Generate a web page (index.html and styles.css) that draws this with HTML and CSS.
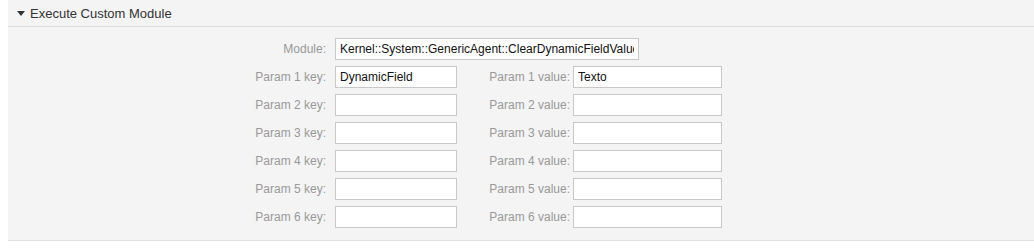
FILE: index.html
```html
<!DOCTYPE html>
<html>
<head>
    <title>Execute Custom Module</title>
    <link rel="stylesheet" href="styles.css">
</head>
<body>
    <div class="widget">
        <div class="header">
            <span class="toggle"></span>
            <h2>Execute Custom Module</h2>
        </div>
        <div class="content">
            <div class="row">
                <label class="key-label">Module:</label>
                <input type="text" class="module" value="Kernel::System::GenericAgent::ClearDynamicFieldValue">
            </div>
            <div class="row">
                <label class="key-label">Param 1 key:</label>
                <input type="text" class="key" value="DynamicField">
                <label class="value-label">Param 1 value:</label>
                <input type="text" class="value" value="Texto">
            </div>
            <div class="row">
                <label class="key-label">Param 2 key:</label>
                <input type="text" class="key">
                <label class="value-label">Param 2 value:</label>
                <input type="text" class="value">
            </div>
            <div class="row">
                <label class="key-label">Param 3 key:</label>
                <input type="text" class="key">
                <label class="value-label">Param 3 value:</label>
                <input type="text" class="value">
            </div>
            <div class="row">
                <label class="key-label">Param 4 key:</label>
                <input type="text" class="key">
                <label class="value-label">Param 4 value:</label>
                <input type="text" class="value">
            </div>
            <div class="row">
                <label class="key-label">Param 5 key:</label>
                <input type="text" class="key">
                <label class="value-label">Param 5 value:</label>
                <input type="text" class="value">
            </div>
            <div class="row">
                <label class="key-label">Param 6 key:</label>
                <input type="text" class="key">
                <label class="value-label">Param 6 value:</label>
                <input type="text" class="value">
            </div>
        </div>
    </div>
</body>
</html>
```

FILE: styles.css
```css
body {
    margin: 0 0 0 8px;
    font-family: "Liberation Sans", Arial, sans-serif;
    font-size: 12px;
    background: #fff;
}

.widget {
    background: #f4f4f4;
    border-bottom: 1px solid #e0e0e0;
}

.header {
    display: flex;
    align-items: center;
    height: 26px;
    border-bottom: 1px solid #dcdcdc;
    padding-left: 9px;
}

.toggle {
    width: 0;
    height: 0;
    border-left: 4.5px solid transparent;
    border-right: 4.5px solid transparent;
    border-top: 5px solid #333;
    margin-right: 5px;
    margin-top: 1px;
}

.header h2 {
    margin: 0;
    font-size: 13px;
    font-weight: normal;
    color: #333;
}

.content {
    padding: 11px 0 12px;
    display: flex;
    flex-direction: column;
    gap: 6px;
}

.row {
    display: flex;
    align-items: center;
}

label {
    color: #999;
    text-align: right;
}

.key-label {
    width: 318px;
    margin-right: 9px;
}

.value-label {
    width: 113px;
    margin-right: 3px;
}

input {
    box-sizing: border-box;
    height: 22px;
    margin: 0;
    padding: 0 4px;
    border: 1px solid #c8c8c8;
    background: #fff;
    font-family: "Liberation Sans", Arial, sans-serif;
    font-size: 12px;
    color: #111;
    outline: none;
}

.module {
    width: 304px;
}

.key {
    width: 122px;
}

.value {
    width: 149px;
}
```
